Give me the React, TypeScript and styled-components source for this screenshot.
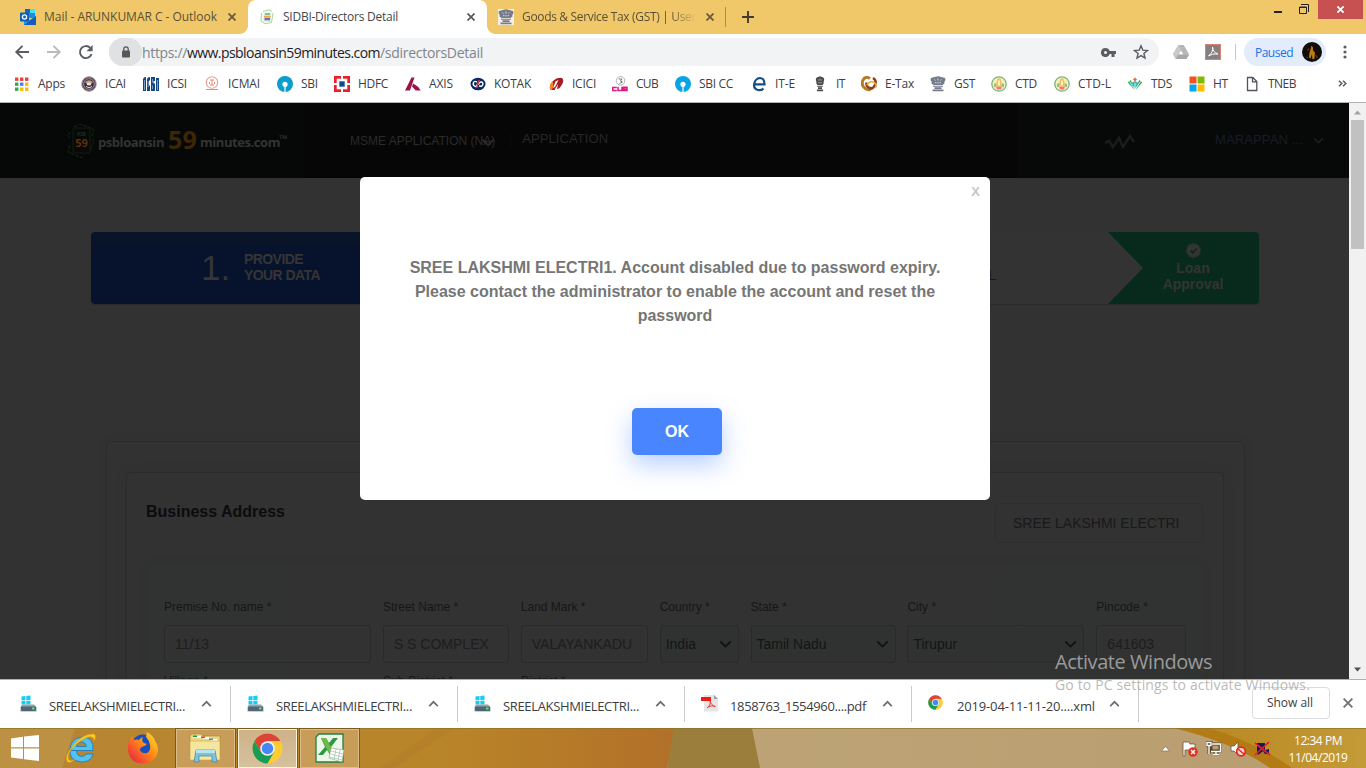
import React, { useLayoutEffect, useRef, useState } from "react";
import styled, { createGlobalStyle } from "styled-components";

const ui = `"Open Sans", "Noto Sans", sans-serif`;
const web = `"Liberation Sans", Arial, sans-serif`;

const Global = createGlobalStyle`
  *{box-sizing:border-box}
  body{margin:0;overflow:hidden;background:#fff}
  svg{display:block;flex:none}
`;

const Screen = styled.div`
  position:relative;width:1366px;height:768px;display:flex;flex-direction:column;
  overflow:hidden;font-family:${ui};font-size:12px;color:#3c4043;
`;

/* ---- text tracked to a given measure ---- */
const TextSpan = styled.span`
  display:inline-block;white-space:pre;flex:none;
`;
function Tracked({ width, children }: { width: number; children: string }) {
  const ref = useRef<HTMLSpanElement>(null);
  const [spacing, setSpacing] = useState(0);
  useLayoutEffect(() => {
    const el = ref.current;
    if (el) setSpacing((width - el.getBoundingClientRect().width) / children.length);
  }, [width, children]);
  return <TextSpan ref={ref} style={{ letterSpacing: spacing }}>{children}</TextSpan>;
}

/* ---- tab strip ---- */
const TabStrip = styled.div`
  height:34px;flex:none;display:flex;background:#f0c869;
`;
const Tab = styled.div<{ $w: number; $active?: boolean; $pad: number }>`
  position:relative;width:${p => p.$w}px;height:34px;display:flex;align-items:center;
  padding-left:${p => p.$pad}px;flex:none;color:${p => (p.$active ? "#45474a" : "#5b5034")};
  background:${p => (p.$active ? "#fff" : "transparent")};
  border-radius:${p => (p.$active ? "8px 8px 0 0" : "0")};
  &::before,&::after{
    content:"";display:${p => (p.$active ? "block" : "none")};position:absolute;bottom:0;width:8px;height:8px;
  }
  &::before{left:-8px;background:radial-gradient(circle at 0 0,transparent 7.5px,#fff 8px)}
  &::after{right:-8px;background:radial-gradient(circle at 100% 0,transparent 7.5px,#fff 8px)}
`;
const TabTitle = styled.div<{ $w: number; $fade?: boolean }>`
  width:${p => p.$w}px;margin-left:8px;overflow:hidden;white-space:nowrap;line-height:18px;flex:none;
  ${p => p.$fade && "-webkit-mask-image:linear-gradient(90deg,#000 80%,transparent 95%);"}
`;
const TabDivider = styled.div`width:1px;height:20px;margin:7px 16px 0 3px;background:#a88d4e;`;
const NewTab = styled.div`height:34px;display:flex;align-items:center;`;
const WindowButtons = styled.div`
  margin-left:auto;margin-right:3px;display:flex;align-items:flex-start;
`;
const CloseWindow = styled.div`
  width:45px;height:19px;margin-left:9px;background:#c75050;display:flex;align-items:center;justify-content:center;
`;
const WinGlyph = styled.div<{ $top: number; $ml?: number }>`
  padding-top:${p => p.$top}px;margin-left:${p => p.$ml || 0}px;
`;

/* ---- toolbar ---- */
const Toolbar = styled.div`
  height:36px;flex:none;display:flex;align-items:center;padding:0 15px 0 14px;background:#fff;
`;
const NavIcons = styled.div`display:flex;gap:16px;margin-right:15px;`;
const Omnibox = styled.div`
  width:1050px;height:28px;border-radius:14px;background:#f1f3f4;display:flex;align-items:center;
  font-size:14px;color:#80868b;padding-right:10px;
`;
const LockChip = styled.div`
  width:33px;height:28px;border-radius:14px;background:#dfe1e2;display:flex;align-items:center;justify-content:center;
`;
const Host = styled.span`color:#202124;`;
const OmniIcons = styled.div`margin-left:auto;display:flex;align-items:center;gap:17px;`;
const Extensions = styled.div`display:flex;align-items:center;gap:16px;margin-left:14px;`;
const BarDivider = styled.div`width:1px;height:16px;background:#c6c8cb;margin:0 8px 0 14px;`;
const Profile = styled.div`
  height:28px;width:82px;border-radius:14px;background:#e2ecfb;color:#1a73e8;display:flex;align-items:center;
  justify-content:space-between;padding:0 4px 0 11px;
`;
const Kebab = styled.div`margin-left:17px;`;

/* ---- bookmarks ---- */
const Bookmarks = styled.div`
  height:33px;flex:none;display:flex;align-items:center;padding:0 19px 5px 14px;background:#fff;
  border-bottom:1px solid #b3b3b3;
`;
const Bookmark = styled.div<{ $w: number }>`
  width:${p => p.$w}px;flex:none;display:flex;align-items:center;gap:8px;line-height:18px;
`;
const More = styled.div`margin-left:auto;`;

/* ---- page ---- */
const Viewport = styled.div`height:576px;flex:none;display:flex;background:#323232;`;
const Page = styled.div`
  width:1349px;height:576px;overflow:hidden;font-family:${web};flex:none;position:relative;
`;
const Scrollbar = styled.div`
  width:17px;background:#f1f1f1;display:flex;flex-direction:column;align-items:center;padding:7px 0 7px;
`;
const Thumb = styled.div`width:13px;height:129px;background:#c1c1c1;margin:5px 0 auto;`;
const Header = styled.div`
  height:75px;background:linear-gradient(90deg,#050807 0 305px,#060606 305px 1017px,#060908 1017px);
  display:flex;align-items:flex-start;color:#2b2b2b;font-size:12px;
`;
const Brand = styled.div`
  width:283px;height:75px;margin-left:67px;display:flex;align-items:center;
  font-family:${ui};font-weight:700;font-size:13px;color:#343434;
`;
const BrandWord = styled.span<{ $ml: number }>`margin-left:${p => p.$ml}px;padding-top:2px;`;
const BrandNumber = styled.span`
  font-family:"Noto Sans","Open Sans",sans-serif;font-size:25px;line-height:26px;color:#3d2604;margin:-4px 0 0 4px;font-weight:700;
`;
const Trademark = styled.span`font-size:11px;margin:-5px 0 0 -1px;`;
const MenuItem = styled.div<{ $top: number; $ml?: number; $size?: number; $color?: string }>`
  padding-top:${p => p.$top}px;margin-left:${p => p.$ml || 0}px;font-size:${p => p.$size || 12}px;
  color:${p => p.$color || "#2b2b2b"};line-height:16px;white-space:nowrap;
`;
const MenuCaret = styled.div`margin:35px 0 0 -14px;`;
const MenuDivider = styled.div`width:1px;height:16px;margin:30px 0 0 15px;background:#0b0b0b;`;
const Pulse = styled.div`margin:31px 0 0 auto;`;

const Steps = styled.div`
  width:1168px;height:72px;margin:54px 0 0 91px;display:flex;border-radius:4px;background:#333333;
  box-shadow:0 1px 1px #2a2a2a;overflow:hidden;
`;
const StepOne = styled.div`
  width:389px;background:linear-gradient(#091428 0 12px,#07122c 14px);display:flex;align-items:center;color:#353535;
  padding-left:110px;
`;
const StepNumber = styled.div`font-size:35px;line-height:36px;width:43px;`;
const StepName = styled.div`font-size:14px;line-height:16px;font-weight:700;padding-bottom:2px;`;
const StepMiddle = styled.div`
  flex:1;display:flex;justify-content:flex-end;align-items:center;padding:13px 112px 0 0;
  font-size:14px;color:#171717;
`;
const StepDone = styled.div`
  width:151px;background:#072a1d;display:flex;flex-direction:column;align-items:center;padding:11px 0 0 19px;
  clip-path:polygon(0 0,100% 0,100% 100%,0 100%,35px 50%);color:#343434;
  font-size:14px;line-height:16px;font-weight:700;text-align:center;
`;
const DoneLabel = styled.div`padding-top:2px;`;
const Card = styled.div`
  width:1139px;height:400px;margin:137px 0 0 106px;padding:30px 20px 0 19px;border:1px solid #2b2b2b;border-radius:4px;
  box-shadow:0 0 12px rgba(0,0,0,.05);
`;
const InnerCard = styled.div`
  height:400px;border:1px solid #2b2b2b;border-radius:3px;padding:30px 19px 0 20px;background:#323232;
  box-shadow:0 0 14px rgba(0,0,0,.05);
`;
const CardHead = styled.div`display:flex;justify-content:space-between;align-items:flex-start;height:60px;`;
const CardTitle = styled.div`font-size:16px;font-weight:700;color:#0c0c0c;line-height:18px;margin-left:-1px;`;
const EntityButton = styled.div`
  width:208px;height:40px;margin-right:1px;border:1px solid #2d2d2d;border-radius:5px;
  font-size:14px;color:#191919;display:flex;align-items:center;padding-left:17px;
`;
const Panel = styled.div`
  height:300px;background:linear-gradient(90deg,#303332 0 106px,#323232 150px 850px,#303332 880px);
  border-radius:4px;padding:36px 17px 0;box-shadow:0 0 8px rgba(0,0,0,.06);
`;
const Fields = styled.div`
  display:grid;grid-template-columns:207px 126px 127px 79px 145px 177px 90px;column-gap:11.9px;
  font-size:12px;color:#161616;
`;
const FieldLabel = styled.div`line-height:16px;height:26px;white-space:nowrap;`;
const FieldBox = styled.div<{ $select?: boolean }>`
  height:38px;border:1px solid #2a2a2a;border-radius:3px;display:flex;align-items:center;justify-content:space-between;
  padding:0 ${p => (p.$select ? "6px 0 5px" : "10px")};font-size:14px;
  color:${p => (p.$select ? "#141414" : "#1d1d1d")};background:${p => (p.$select ? "#303232" : "#323232")};
  margin-bottom:10px;white-space:nowrap;overflow:hidden;
`;

const Dialog = styled.div`
  position:absolute;left:360px;top:177px;width:630px;height:323px;border-radius:5px;background:#fff;
  font-family:${web};display:flex;flex-direction:column;align-items:center;padding:7px 10px 0;
`;
const DialogClose = styled.div`align-self:flex-end;font-weight:700;font-size:13px;line-height:16px;color:#c6c6c6;`;
const Message = styled.div`
  margin-top:56px;text-align:center;font-size:16px;line-height:24px;font-weight:700;color:#767676;
`;
const OkButton = styled.div`
  width:90px;height:47px;margin:80px 0 0 4px;border-radius:5px;background:#4885ff;color:#fff;
  font-size:16px;font-weight:700;display:flex;align-items:center;justify-content:center;
  box-shadow:0 10px 24px rgba(72,133,255,.38);
`;

/* ---- downloads ---- */
const Downloads = styled.div`
  height:49px;flex:none;display:flex;align-items:center;background:#fff;border-top:1px solid #b0b0b0;
`;
const Download = styled.div<{ $first?: boolean }>`
  width:${p => (p.$first ? 231 : 227)}px;height:36px;flex:none;border-right:1px solid #c9cbcd;display:flex;
  padding:0 18px 0 ${p => (p.$first ? 20 : 16)}px;font-size:13px;
`;
const FileIcon = styled.div`padding-top:9px;width:29px;`;
const FileName = styled.div`padding-top:10px;line-height:20px;`;
const FileCaret = styled.div`margin-left:auto;padding-top:14px;`;
const ShowAll = styled.div`
  width:78px;height:32px;margin:0 13px 3px auto;border:1px solid #dadce0;border-radius:4px;font-size:12px;
  display:flex;align-items:center;justify-content:center;font-weight:500;padding-right:2px;
`;
const CloseShelf = styled.div`margin:0 13px 2px 0;`;

/* ---- taskbar ---- */
const Taskbar = styled.div`height:40px;flex:none;position:relative;`;
const Wallpaper = styled.div`position:absolute;inset:0;`;
const TaskRow = styled.div`position:relative;height:40px;display:flex;align-items:center;`;
const Launcher = styled.div<{ $w: number }>`
  width:${p => p.$w}px;height:40px;display:flex;align-items:center;justify-content:center;flex:none;
`;
const TaskButton = styled.div<{ $active?: boolean }>`
  width:59px;height:39px;margin-right:3px;display:flex;align-items:center;justify-content:center;flex:none;
  border:1px solid ${p => (p.$active ? "#fff3dc" : "#dbbd8c")};outline:1px solid #7b5a20;
  background:${p => (p.$active ? "linear-gradient(#cdb289,#d6c19e)" : "#c89d5a")};
`;
const Tray = styled.div`margin-left:auto;display:flex;align-items:center;padding-top:2px;`;
const TrayIcon = styled.div<{ $mr: number }>`margin-right:${p => p.$mr}px;`;
const Clock = styled.div`
  width:62px;margin-right:17px;color:#fff;text-align:center;line-height:17px;font-size:12px;
`;

/* ---- activation watermark ---- */
const Watermark = styled.div`
  position:absolute;left:1055px;top:649px;color:#9a9a9a;font-size:20px;line-height:26px;pointer-events:none;
`;
const WatermarkSub = styled.div`font-size:14px;line-height:20px;color:rgba(165,165,165,.78);`;

/* ---- icons ---- */
const X = ({ c = "#56595c", s = 8, w = 1.7 }) => (
  <svg width={s} height={s} viewBox="0 0 8 8"><path d="M.5.5l7 7M7.5.5l-7 7" stroke={c} strokeWidth={w} /></svg>
);
const Chevron = ({ c = "#0e0e0e", w = 12, up = false, sw = 1.6 }) => (
  <svg width={w} height={w * 0.65} viewBox="0 0 12 8">
    <path d={up ? "M1.2 6.8L6 2l4.8 4.8" : "M1 1.3l5 5 5-5"} fill="none" stroke={c} strokeWidth={sw} />
  </svg>
);
const Outlook = () => (
  <svg width="16" height="16" viewBox="0 0 16 16">
    <path d="M5 0h10v9H5z" fill="#1490df" /><path d="M10 0h5v4h-5z" fill="#50d9ff" /><path d="M5 0h5v4H5z" fill="#0f6cbd" />
    <path d="M4 7l6 4 6-4v9H4z" fill="#1f9de5" /><path d="M4 16l12-9v9z" fill="#185abd" />
    <rect y="3.500" width="9" height="9" rx="1" fill="#0f5fb4" />
    <circle cx="4.500" cy="8" r="2.100" fill="none" stroke="#fff" strokeWidth="1.300" />
  </svg>
);
const PsbIcon = () => (
  <svg width="15" height="16" viewBox="0 0 15 16">
    <path d="M3 2.500L9 .8l3 1.500M1.500 4L1 12l4 2.700 6.500-1.200L13 4" fill="none" stroke="#9bcf8c" strokeWidth=".9" />
    <rect x="3.500" y="3.500" width="7.500" height="9.500" fill="#dcefe4" />
    <path d="M5 4.300h5v1.500H5z" fill="#69b36c" /><path d="M4 6.800h6.500v1.900H4z" fill="#f3a83f" /><path d="M4.500 9h5.500v2.300H4.500z" fill="#6d74ac" />
  </svg>
);
const Emblem = ({ c = "#767b8d", bg = "none", w = 16 }) => (
  <svg width="16" height="16" viewBox="0 0 16 16">
    <rect width="16" height="16" fill={bg} />
    <g transform={`translate(${8 - w / 2} 0) scale(${w / 16} 1)`} fill={c}>
      <path d="M1 2l3.500-1L8 .3l3.500.7 3.500 1 .5 2-1.200 2 .2 1.500L12.500 9h-9L1.500 7.500l.2-1.500-1.200-2z" />
      <path d="M3 9.700h10v1H3zM4.500 11.200h7v1.800h-7zM2.500 13.500h11v1.700h-11z" />
      <path d="M4.500 3.500l1 1M8 2.500v2M11.500 3.500l-1 1M5 6.700h1.500M9.500 6.700H11M8 6v1.500" stroke="#fff" strokeWidth=".7" />
    </g>
  </svg>
);
const Back = ({ c = "#5a5d61", flip = false }) => (
  <svg width="16" height="16" viewBox="0 0 16 16">
    <path transform={flip ? "translate(16 0) scale(-1 1)" : undefined} d="M15 8H2.500M8.500 1.800L2.300 8l6.200 6.200" fill="none" stroke={c} strokeWidth="1.900" />
  </svg>
);
const Reload = () => (
  <svg width="16" height="16" viewBox="0 0 16 16">
    <path d="M13.600 10.200A6 6 0 1 1 12.300 3.900" fill="none" stroke="#5a5d61" strokeWidth="1.900" /><path d="M14.600 1v6.200H8.500z" fill="#5a5d61" />
  </svg>
);
const Chrome = ({ s }: { s: number }) => (
  <svg width={s} height={s} viewBox="0 0 32 32">
    <circle cx="16" cy="16" r="15.500" fill="#fc3" />
    <path d="M16 8.250H29.420A15.500 15.500 0 0 0 2.580 8.250L9.290 19.880Z" fill="#dc4437" />
    <path d="M2.580 8.250L9.290 19.880 22.710 19.880 16 31.500A15.500 15.500 0 0 1 2.580 8.250Z" fill="#189d59" />
    <circle cx="16" cy="16" r="7.500" fill="#f3f3f3" /><circle cx="16" cy="16" r="5.900" fill="#4688f1" />
  </svg>
);
const DriveFile = () => (
  <svg width="17" height="18" viewBox="0 0 17 18">
    <path d="M1.500 1.500l4-.5v4h-4zM6.300 1l4.200-.5V5H6.300zM1.500 5.700h4v3.800h-4zM6.300 5.700h4.200v3.800H6.300z" fill="#13cdf5" />
    <path d="M2 9.500h12l2.500 2.500v4.500H.5V12z" fill="#98a3ab" /><rect x="1" y="11.500" width="15" height="4.500" rx="1" fill="#4f6676" />
    <path d="M12 12.500h2.500v2H12z" fill="#65e35d" />
  </svg>
);
const PdfFile = () => (
  <svg width="17" height="17" viewBox="0 0 17 17">
    <path d="M3 0h10l4 4v12.500H3z" fill="#e5e5e5" /><path d="M13 0v4h4z" fill="#9c9c9c" />
    <path d="M0 2h10v4H0z" fill="#ed1c10" /><path d="M9 6c1 3 2.500 5 5.500 5.500M6 13c2.500-1.500 3.500-4 3.300-7M7 12c3-1.300 5-1.500 7-.5" fill="none" stroke="#e53d33" />
  </svg>
);
const Sbi = ({ c }: { c: string }) => (
  <svg width="16" height="16" viewBox="0 0 16 16"><circle cx="8" cy="8" r="8" fill={c} /><circle cx="8" cy="8.300" r="2.600" fill="#fff" /><path d="M7.400 8h1.200v8H7.400z" fill="#fff" /></svg>
);
const Ctd = () => (
  <svg width="16" height="16" viewBox="0 0 16 16">
    <circle cx="8" cy="8" r="7.200" fill="#f3efc4" stroke="#7db57a" strokeWidth="1.300" />
    <path d="M6.500 2.500h3L11.500 10h-7z" fill="#f1c25a" /><path d="M3 8l2-1v4H3zM11 7l2 1v3h-2z" fill="#9cc07a" /><path d="M5 10.500h6L10 13.500H6z" fill="#f07a6c" /><path d="M7 4.500h2v5H7z" fill="#fdf0b4" />
  </svg>
);

const Svg16 = ({ children }: { children: React.ReactNode }) => <svg width="16" height="16" viewBox="0 0 16 16">{children}</svg>;

const bookmarks: [string, number, number, React.ReactNode][] = [
  ["Apps", 67, 27, <Svg16>
    {["#ea4335", "#ea4335", "#ea4335", "#34a853", "#4285f4", "#fbbc05", "#34a853", "#fbbc05", "#fbbc05"].map((c, i) => (
      <rect key={i} x={1 + (i % 3) * 5} y={1.5 + Math.floor(i / 3) * 5} width="3.400" height="3.400" fill={c} />))}
  </Svg16>],
  ["ICAI", 62, 21, <Svg16><circle cx="8" cy="8" r="7.300" fill="#54415f" stroke="#b0a3a5" /><circle cx="8" cy="8" r="5.300" fill="#2f2c58" stroke="#c7a27f" strokeWidth=".8" /><path d="M4 6q4-3.500 8 0l-2 2H6z" fill="#c7a27f" /><ellipse cx="8" cy="8" rx="2.300" ry="1.600" fill="#efe2bd" /><path d="M5 10.500q3 2.500 6 0" stroke="#efe2bd" fill="none" /></Svg16>],
  ["ICSI", 61, 20, <Svg16><path d="M0 3q1-2 2.500-2H3v14H0zM4 4q0-3 3-3v3.500H6v5h1V15H4zM8 1h4v4h-1.500v2.500H12V15H8zM13 2h3v13h-3z" fill="#14477f" /><path d="M1.500 4v10M9.500 3v3.500M9.500 9.500V13M14.500 4v10M5.200 5v6" stroke="#a7c2dc" strokeWidth=".7" fill="none" /></Svg16>],
  ["ICMAI", 73, 32, <Svg16><circle cx="8" cy="6.500" r="5.700" fill="none" stroke="#efa092" strokeWidth="1.100" /><path d="M6 4h4M8 4v5M6 9h4M5.500 6v2M10.500 6v2M2 13.500h12" stroke="#eb8471" fill="none" /></Svg16>],
  ["SBI", 57, 17, <Sbi c="#0b9dcb" />],
  ["HDFC", 71, 30, <Svg16><path d="M0 0h16v16H0z" fill="#ed1f27" /><path d="M2.700 2.700h10.600v10.600H2.700z" fill="#fff" /><path d="M7 0h2v3H7zM7 13h2v3H7zM0 7h3v2H0zM13 7h3v2h-3z" fill="#fff" /><path d="M5.300 5.300h5.400v5.400H5.300z" fill="#0d4b91" /></Svg16>],
  ["AXIS", 65, 24, <Svg16><path d="M6.500 1.500h3L5 14.500H0zM8.200 7.500q5 2.500 7.500 7h-5L7 10.500z" fill="#9c1347" /></Svg16>],
  ["KOTAK", 78, 37, <Svg16><ellipse cx="8" cy="8" rx="7.500" ry="6.300" fill="#062b65" /><path d="M7 6.200Q4.500 4.500 3.500 6.500T4.500 10t3-1.800h1Q9.500 5.500 11.500 6t1.200 2.800T9 9.800" fill="none" stroke="#fff" strokeWidth="1.400" /><path d="M9.300 4L6.700 12" stroke="#e9303b" strokeWidth="1.500" /></Svg16>],
  ["ICICI", 64, 24, <Svg16><path d="M2.500 14Q1 9 5 5t9-3q2.500 2 0 6.500T9 13l1-5-3.500 6z" fill="#a41c22" /><path d="M2.500 14Q0 9 5 5q1 4.500-1 9z" fill="#f38421" /><path d="M7.500 5.500l3-1.500-3.500 7-2 1z" fill="#fff" /></Svg16>],
  ["CUB", 63, 22, <Svg16><circle cx="8.500" cy="4.800" r="4.300" fill="none" stroke="#b5afb8" /><path d="M6.500 3H10L8.500 5l2 1-3 1.500" stroke="#777" fill="none" /><path d="M4.800 11.500H.8v3h4M6 10.800v3.700h4v-3.700M11.500 11.300H15v3.200h-3.500zM11.500 13H15" stroke="#de1b84" strokeWidth="1.500" fill="none" /></Svg16>],
  ["SBI CC", 76, 34, <Sbi c="#08a4e3" />],
  ["IT-E", 61, 20, <Svg16><path d="M3.500 8.300h10Q13.500 2 8.800 2 4.500 2.500 3.300 7.500T7 14q3 .5 5.500-1.300" fill="none" stroke="#164f87" strokeWidth="2.200" /></Svg16>],
  ["IT", 49, 9, <Emblem c="#4a4a4a" w={9} />],
  ["E-Tax", 69, 29, <Svg16><path d="M9 2.500Q4-.5 1.800 4.500T5 13q4 2 5.500-2" fill="none" stroke="#b67b25" strokeWidth="3" /><path d="M5.500 6.500q-.5 4 3 5.500t5.500-3T12 2" fill="none" stroke="#8f3d20" strokeWidth="2.500" /><path d="M6 9q3-5 7-2.500t1 5.500" fill="none" stroke="#e5b544" strokeWidth="1.600" /></Svg16>],
  ["GST", 61, 21, <Emblem />],
  ["CTD", 63, 22, <Ctd />],
  ["CTD-L", 73, 33, <Ctd />],
  ["TDS", 62, 21, <Svg16><path d="M8 14.500L.8 6.500l3-2.500zM8 14.500l7.200-8-3-2.500z" fill="#29a85a" /><path d="M8 13L4.500 7 8 5l3.500 2z" fill="#3ab5c5" /><path d="M8 1.500l2 2-2 2-2-2z" fill="#ee6b2d" /><path d="M8 14V7M8 14L2.500 5.500M8 14l5.500-8.500" stroke="#fff" strokeWidth=".8" /></Svg16>],
  ["HT", 55, 15, <Svg16><path d="M.5.5h7v7h-7z" fill="#f25022" /><path d="M8.500.5h7v7h-7z" fill="#7fba00" /><path d="M.5 8.500h7v7h-7z" fill="#00a4ef" /><path d="M8.500 8.500h7v7h-7z" fill="#ffb900" /></Svg16>],
  ["TNEB", 60, 28, <Svg16><path d="M3.500 1.500h5.300l4 4v9H3.500zM8.500 1.500v4.300h4.300" fill="none" stroke="#505357" strokeWidth="1.300" /></Svg16>],
];

const fields: [string, string, boolean][] = [
  ["Premise No. name *", "11/13", false],
  ["Street Name *", "S S COMPLEX", false],
  ["Land Mark *", "VALAYANKADU", false],
  ["Country *", "India", true],
  ["State *", "Tamil Nadu", true],
  ["City *", "Tirupur", true],
  ["Pincode *", "641603", false],
];

const files: [string, number, React.ReactNode][] = [
  ["SREELAKSHMIELECTRI...", 136, <DriveFile />],
  ["SREELAKSHMIELECTRI...", 136, <DriveFile />],
  ["SREELAKSHMIELECTRI...", 136, <DriveFile />],
  ["1858763_1554960....pdf", 136, <PdfFile />],
  ["2019-04-11-11-20....xml", 138, <Chrome s={15} />],
];

function BrowserTop() {
  return (
    <>
      <TabStrip>
        <Tab $w={248} $pad={20}>
          <Outlook /><TabTitle $w={184}><Tracked width={173}>Mail - ARUNKUMAR C - Outlook</Tracked></TabTitle><X c="#66583a" />
        </Tab>
        <Tab $w={239} $pad={12} $active>
          <PsbIcon /><TabTitle $w={184}><Tracked width={115}>SIDBI-Directors Detail</Tracked></TabTitle><X />
        </Tab>
        <Tab $w={235} $pad={11}>
          <Emblem bg="#f7f2e5" /><TabTitle $w={184} $fade><Tracked width={174}>{"Goods & Service Tax (GST) | User"}</Tracked></TabTitle><X c="#66583a" />
        </Tab>
        <TabDivider />
        <NewTab><svg width="12" height="12" viewBox="0 0 12 12"><path d="M0 6h12M6 0v12" stroke="#413b2d" strokeWidth="1.900" /></svg></NewTab>
        <WindowButtons>
          <WinGlyph $top={11}><svg width="8" height="2"><path d="M0 0h8v2H0z" fill="#222" /></svg></WinGlyph>
          <WinGlyph $top={4} $ml={17}>
            <svg width="10" height="10" viewBox="0 0 10 10"><path d="M2 .5h7.500V8M.5 3h7v6.500h-7zM.5 3.500h7" fill="none" stroke="#222" /></svg>
          </WinGlyph>
          <CloseWindow><X c="#fff" s={7} w={2} /></CloseWindow>
        </WindowButtons>
      </TabStrip>
      <Toolbar>
        <NavIcons><Back /><Back c="#b9babc" flip /><Reload /></NavIcons>
        <Omnibox>
          <LockChip>
            <svg width="10" height="12" viewBox="0 0 10 12"><rect x="1" y="4.500" width="8" height="7" rx="1" fill="#55585b" /><path d="M2.800 5V3a2.200 2.200 0 0 1 4.400 0v2" fill="none" stroke="#55585b" strokeWidth="1.300" /></svg>
          </LockChip>
          <Tracked width={45}>https://</Tracked><Host><Tracked width={193}>www.psbloansin59minutes.com</Tracked></Host><Tracked width={103}>/sdirectorsDetail</Tracked>
          <OmniIcons>
            <svg width="15" height="9" viewBox="0 0 15 9"><path d="M4.500 0a4.500 4.500 0 0 1 4.200 3H15v3h-1.500v3h-3V6H8.700A4.500 4.500 0 1 1 4.500 0zm0 3a1.500 1.500 0 1 0 0 3 1.500 1.500 0 0 0 0-3z" fill="#5a5d61" /></svg>
            <svg width="16" height="16" viewBox="0 0 16 16"><path d="M8 1.800l1.800 4.300 4.700.4-3.600 3 1.100 4.600L8 11.600l-4 2.500 1.100-4.600-3.600-3 4.700-.4z" fill="none" stroke="#5a5d61" strokeWidth="1.400" /></svg>
          </OmniIcons>
        </Omnibox>
        <Extensions>
          <svg width="16" height="14" viewBox="0 0 16 14"><path d="M5.300 0h5.400L16 9.300 13.300 14H2.700L0 9.300z" fill="#b6b6b6" /><path d="M5.300 0L8 4.600 2.700 14 0 9.300z" fill="#c9c9c9" /><path d="M8 5.500l2.300 3.800H5.700z" fill="#fff" /><path d="M4.800 10H16l-2.700 4H2.700z" fill="#a8a8a8" /></svg>
          <svg width="16" height="16" viewBox="0 0 16 16"><rect x=".5" y=".5" width="15" height="15" fill="#857f80" stroke="#db8174" /><path d="M7.500 3q1.500 4-4 9 4-3 9.500-2-5.500-2-5.500-7z" fill="none" stroke="#fff" /></svg>
        </Extensions>
        <BarDivider />
        <Profile>
          <Tracked width={38}>Paused</Tracked>
          <svg width="20" height="20" viewBox="0 0 20 20"><circle cx="10" cy="10" r="10" fill="#130d08" /><path d="M9.500 3.500l1.500 2v3l2 2-.5 6-2 1-.7-5-1.300 4-1.500-1 .5-5 1-3z" fill="#b87b19" /><path d="M5.500 8.500l1.500-2M13.500 13l2 3M6 15l-1.500 1" stroke="#692e14" strokeWidth="1.300" /></svg>
        </Profile>
        <Kebab><svg width="4" height="14" viewBox="0 0 4 14"><g fill="#5a5d61"><circle cx="2" cy="2" r="1.600" /><circle cx="2" cy="7" r="1.600" /><circle cx="2" cy="12" r="1.600" /></g></svg></Kebab>
      </Toolbar>
      <Bookmarks>
        {bookmarks.map(([name, w, tw, icon]) => (
          <Bookmark key={name} $w={w}>{icon}<Tracked width={tw}>{name}</Tracked></Bookmark>
        ))}
        <More><svg width="9" height="7" viewBox="0 0 9 7"><path d="M1 .7l2.800 2.800L1 6.300M5 .7l2.800 2.800L5 6.300" fill="none" stroke="#5a5d61" strokeWidth="1.500" /></svg></More>
      </Bookmarks>
    </>
  );
}

function WebPage() {
  return (
    <Page>
      <Header>
        <Brand>
          <svg width="28" height="34" viewBox="0 0 28 34">
            <path d="M7 3l5-3 7 2 8 4-2 6M3 8l-2 3 2 3M3 21l-2 7 9 4 6 2M21 30l4-8M25 15l2 3-2 3" fill="none" stroke="#18270f" strokeDasharray="4 1" />
            <rect x="6" y="4" width="17" height="25" rx="1" fill="#08080b" stroke="#121c0c" />
            <text x="14.500" y="12" textAnchor="middle" fontSize="4.500" fontWeight="700" fontFamily="Open Sans, sans-serif" fill="#0d3a12">PSB</text>
            <text x="14.500" y="23" textAnchor="middle" fontSize="11" fontWeight="700" fontFamily="Open Sans, sans-serif" fill="#5a3107">59</text>
          </svg>
          <BrandWord $ml={3}><Tracked width={66}>psbloansin</Tracked></BrandWord>
          <BrandNumber><Tracked width={29}>59</Tracked></BrandNumber>
          <BrandWord $ml={3}><Tracked width={80}>minutes.com</Tracked></BrandWord>
          <Trademark><Tracked width={9}>™</Tracked></Trademark>
        </Brand>
        <MenuItem $top={30}>MSME APPLICATION (NA)</MenuItem>
        <MenuCaret><Chevron c="#2b2b2b" w={14} sw={1.8} /></MenuCaret>
        <MenuDivider />
        <MenuItem $top={28} $ml={11} $size={13} $color="#272727"><Tracked width={86}>APPLICATION</Tracked></MenuItem>
        <Pulse>
          <svg width="31" height="15" viewBox="0 0 31 15"><path d="M1 9l4-2 4 6 6-9 4 9 7-11 4 6" fill="none" stroke="#1b1b1b" strokeWidth="2.600" /></svg>
        </Pulse>
        <MenuItem $top={29} $ml={80} $size={13} $color="#1b1b28"><Tracked width={88}>MARAPPAN ...</Tracked></MenuItem>
        <MenuItem $top={34} $ml={10}><Chevron c="#262626" w={11} sw={1.4} /></MenuItem>
        <MenuItem $top={0} $ml={25} />
      </Header>
      <Steps>
        <StepOne>
          <StepNumber>1.</StepNumber>
          <StepName><Tracked width={59}>PROVIDE</Tracked><br /><Tracked width={76}>YOUR DATA</Tracked></StepName>
        </StepOne>
        <StepMiddle>L</StepMiddle>
        <StepDone>
          <svg width="15" height="15" viewBox="0 0 15 15"><circle cx="7.500" cy="7.500" r="6.600" fill="#343434" stroke="#343434" strokeDasharray="2 1.200" strokeWidth="1.600" /><path d="M4.500 7.500l2.200 2.300 4-4.300" fill="none" stroke="#072a1d" strokeWidth="1.700" /></svg>
          <DoneLabel>Loan<br />Approval</DoneLabel>
        </StepDone>
      </Steps>
      <Card>
        <InnerCard>
          <CardHead>
            <CardTitle>Business Address</CardTitle>
            <EntityButton>SREE LAKSHMI ELECTRI</EntityButton>
          </CardHead>
          <Panel>
            <Fields>
              {fields.map(([label, value, select]) => (
                <div key={label}>
                  <FieldLabel>{label}</FieldLabel>
                  <FieldBox $select={select}>{value}{select && <Chevron w={13} c="#101010" />}</FieldBox>
                </div>
              ))}
              <FieldLabel>Village *</FieldLabel>
              <FieldLabel>Sub-District *</FieldLabel>
              <FieldLabel>District *</FieldLabel>
            </Fields>
          </Panel>
        </InnerCard>
      </Card>
    </Page>
  );
}

function TaskBar() {
  return (
    <Taskbar>
      <Wallpaper>
        <svg width="1366" height="40" viewBox="0 0 1366 40">
          <defs>
            <linearGradient id="amber"><stop offset="0" stopColor="#b78534" /><stop offset=".65" stopColor="#b98529" /><stop offset="1" stopColor="#b27028" /></linearGradient>
            <linearGradient id="sand"><stop offset="0" stopColor="#c0aa7a" /><stop offset="1" stopColor="#b99d70" /></linearGradient>
            <linearGradient id="gold"><stop offset="0" stopColor="#b8841c" /><stop offset="1" stopColor="#c39b38" /></linearGradient>
          </defs>
          <path d="M0 0h1366v40H0z" fill="url(#sand)" />
          <path d="M0 0h675l-8 40H0z" fill="url(#amber)" />
          <path d="M0 0h75L62 40H0z" fill="#bd9144" />
          <path d="M395 40q30-20 60-40h-20q-25 20-55 40z" fill="#b37a2a" opacity=".45" />
          <path d="M674 0h78l8 40h-93z" fill="#9c7e3c" />
          <path d="M1174 0h192v40h-96q-35-25-96-40z" fill="url(#gold)" />
          <path d="M1174 0q61 15 96 40h22q-40-28-84-40z" fill="#b27b16" />
          <path d="M0 0h1366v1H0z" fill="#8d7028" opacity=".7" />
        </svg>
      </Wallpaper>
      <TaskRow>
        <Launcher $w={50}>
          <svg width="28" height="26" viewBox="0 0 28 26"><path d="M0 3.500l12-1.700V12.300H0zM13 1.600L28 0v12.300H13zM0 13.500h12v10.600L0 22.500zM13 13.500h15V26l-15-1.800z" fill="#fff" /></svg>
        </Launcher>
        <Launcher $w={62}>
          <svg width="32" height="32" viewBox="0 0 32 32">
            <path d="M5 18.500h23Q29 5 17 5 6 6 5 17.500T17 30q9 0 11-8h-7q-1.500 2.500-4.500 2.500-4.500 0-5-6zM11.500 14.500q.5-4.500 5-4.500t4.800 4.500z" fill="#51c3f1" stroke="#1a79bd" strokeWidth=".8" fillRule="evenodd" />
            <path d="M2.500 30q-4-5 6-17T29 2q3 2 0 7 0-5-6-4Q15 8 8.500 15T3.500 27q1 3 6.500.5-5 4-7.500 2.500z" fill="#fccb1d" stroke="#d89617" strokeWidth=".5" />
          </svg>
        </Launcher>
        <Launcher $w={62}>
          <svg width="32" height="32" viewBox="0 0 32 32">
            <defs><linearGradient id="fox" x1="1" y1="0" x2="0" y2="1"><stop offset="0" stopColor="#ffe72e" /><stop offset=".45" stopColor="#ff8a16" /><stop offset="1" stopColor="#e8144c" /></linearGradient></defs>
            <circle cx="16" cy="14" r="11.500" fill="#174fc0" />
            <path d="M2 9l3-5 2 4q3-1 5 0 1-2 4-3-2 4 1 6l3 1q-2 2-4 2.500-3 1-3 3.500 2 4 7 3 4-2 3-8-1-5-4-8l1-5q7 4 8 9 3 4 3 8 0 7-5 11-5 4-11 3.500Q4 31 1.500 21 0 14 2 9z" fill="url(#fox)" />
          </svg>
        </Launcher>
        <Launcher $w={2} />
        <TaskButton>
          <svg width="33" height="30" viewBox="0 0 33 30">
            <path d="M1 3l2-2h9l2 2h17v21H1z" fill="#edd784" stroke="#b28b35" strokeWidth=".7" /><path d="M4 3h8v2H4zM14 4h6v2h-6zM22 6h6v2h-6z" fill="#fff" /><path d="M4 2.500h4v1.500H4z" fill="#0aa13c" /><path d="M12 3.500h4v1.500h-4z" fill="#d94736" /><path d="M20 5.500h4V7h-4z" fill="#2b99df" />
            <path d="M1 8h30v19H1z" fill="#f5e69d" stroke="#c3a34c" strokeWidth=".6" /><path d="M5 29l2-12h19l2 12h-5v-6H10v6z" fill="#7fc1df" stroke="#4183a4" strokeWidth=".7" /><path d="M7 17h19v3H7z" fill="#b6e5ef" />
          </svg>
        </TaskButton>
        <TaskButton $active><Chrome s={31} /></TaskButton>
        <TaskButton>
          <svg width="30" height="30" viewBox="0 0 30 30">
            <path d="M4 1h24v28H1V4z" fill="#eef6e8" stroke="#238046" strokeWidth="1.300" /><path d="M6 5h5l3 5 4-5h5l-7 9 5 8h-6l-3-5-4 5H3l7-8z" fill="#2f9845" /><path d="M6 5h5l9 17h-5z" fill="#6dbb48" />
            <path d="M16 15l13 2-2 12-13-4z" fill="#fff" stroke="#85a187" strokeWidth=".6" /><path d="M16 18l12 3M15.500 21l12 3M15 24l12 3M21 16l-2 10M25 17l-2 10" stroke="#9dbfa0" strokeWidth=".7" />
          </svg>
        </TaskButton>
        <Tray>
          <TrayIcon $mr={12}><svg width="9" height="6" viewBox="0 0 9 6"><path d="M.5 5L4.500.5l4 4.500z" fill="#fff" stroke="#7a6542" strokeWidth=".6" /></svg></TrayIcon>
          <TrayIcon $mr={8}>
            <svg width="16" height="16" viewBox="0 0 16 16"><path d="M1 1v14h2V9h10V3H8L7 1z" fill="#fff" stroke="#66563a" strokeWidth=".8" /><circle cx="11" cy="11" r="4.800" fill="#df3324" /><path d="M9 9l4 4M13 9l-4 4" stroke="#fff" strokeWidth="1.500" /></svg>
          </TrayIcon>
          <TrayIcon $mr={8}>
            <svg width="16" height="16" viewBox="0 0 16 16"><g fill="none" stroke="#554424" strokeWidth="3"><path d="M5 3h9v7H5zM7 13h6M1 1.500h4v3H1zM3 5v8" /></g><g fill="none" stroke="#fff" strokeWidth="1.400"><path d="M6 3h8.500v7.500H5M7 13.500h6M10 11v2M1 1.500h4v3H1zM3 5v8" /></g></svg>
          </TrayIcon>
          <TrayIcon $mr={8}>
            <svg width="16" height="16" viewBox="0 0 16 16"><path d="M1 5h3l4-4v13l-4-4H1z" fill="#fff" stroke="#66563a" strokeWidth=".8" /><circle cx="11" cy="10.500" r="4.300" fill="#f6d7ce" stroke="#df2d24" strokeWidth="1.800" /><path d="M8 8l6 5" stroke="#df2d24" strokeWidth="1.600" /></svg>
          </TrayIcon>
          <TrayIcon $mr={16}>
            <svg width="17" height="16" viewBox="0 0 17 16"><path d="M3 2h8v7l4-1v5h-4l-2-3-5 4-1-4z" fill="#151858" /><path d="M1 2l15 12M15 1L1 14" stroke="#e51f22" strokeWidth="1.700" /></svg>
          </TrayIcon>
          <Clock><Tracked width={48}>12:34 PM</Tracked><br /><Tracked width={59}>11/04/2019</Tracked></Clock>
        </Tray>
      </TaskRow>
    </Taskbar>
  );
}

export default function App() {
  return (
    <Screen>
      <Global />
      <BrowserTop />
      <Viewport>
        <WebPage />
        <Scrollbar>
          <svg width="7" height="5" viewBox="0 0 7 5"><path d="M0 4.500L3.500.5l3.500 4z" fill="#a3a3a3" /></svg>
          <Thumb />
          <svg width="7" height="5" viewBox="0 0 7 5"><path d="M0 .5h7l-3.500 4z" fill="#505050" /></svg>
        </Scrollbar>
      </Viewport>
      <Downloads>
        {files.map(([name, w, icon], i) => (
          <Download key={i} $first={i === 0}>
            <FileIcon>{icon}</FileIcon>
            <FileName><Tracked width={w}>{name}</Tracked></FileName>
            <FileCaret><Chevron c="#6b6e71" w={11} up sw={1.9} /></FileCaret>
          </Download>
        ))}
        <ShowAll><Tracked width={46}>Show all</Tracked></ShowAll>
        <CloseShelf><X c="#707275" s={10} w={1.5} /></CloseShelf>
      </Downloads>
      <TaskBar />
      <Dialog>
        <DialogClose>X</DialogClose>
        <Message>
          SREE LAKSHMI ELECTRI1. Account disabled due to password expiry.<br />
          Please contact the administrator to enable the account and reset the<br />
          password
        </Message>
        <OkButton>OK</OkButton>
      </Dialog>
      <Watermark>
        <Tracked width={157}>Activate Windows</Tracked>
        <WatermarkSub><Tracked width={255}>Go to PC settings to activate Windows.</Tracked></WatermarkSub>
      </Watermark>
    </Screen>
  );
}
